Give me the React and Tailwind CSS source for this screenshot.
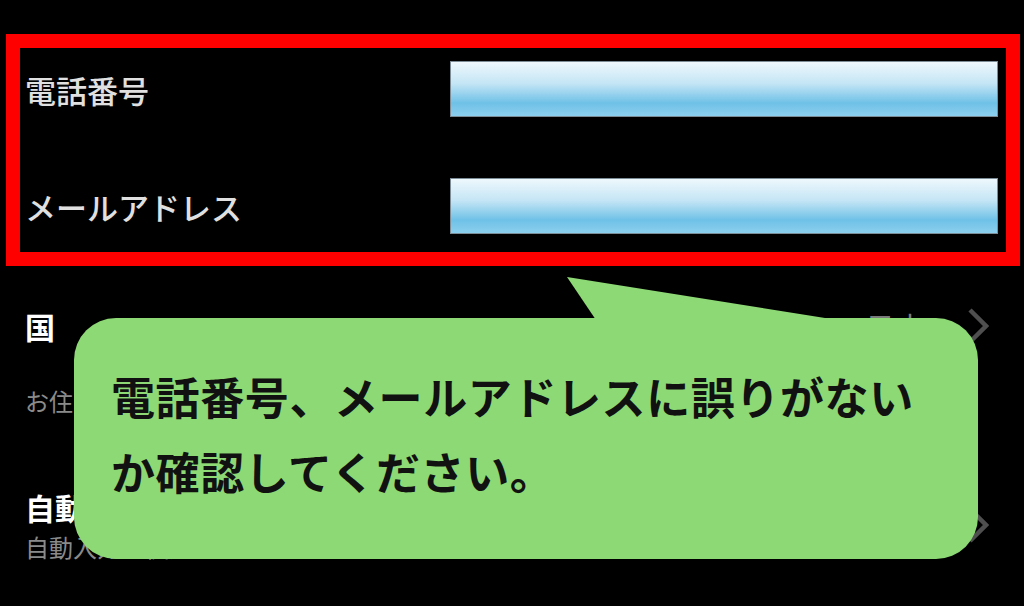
import React from 'react'

const jp = "font-['Noto_Sans_CJK_JP','Noto_Sans',sans-serif]"

function Chevron() {
  return (
    <svg width="22" height="36" viewBox="0 0 22 36" className="shrink-0">
      <path d="M3 2 L19 18 L3 34" fill="none" stroke="#4f4f4f" strokeWidth="4.5" strokeLinejoin="miter" />
    </svg>
  )
}

function FieldRow({ label }) {
  return (
    <div className="flex h-[56px] items-center justify-between">
      <span className="text-[31px] font-medium leading-none text-[#e0e0e0]">{label}</span>
      <div className="h-[56px] w-[548px] border border-[#7d8d98] bg-[linear-gradient(to_bottom,#eef8fd_0%,#c4e5f5_40%,#6fc1e7_76%,#8ccfee_100%)]" />
    </div>
  )
}

export default function App() {
  return (
    <div className={`relative h-[606px] w-[1024px] overflow-hidden bg-black ${jp}`}>
      {/* Highlighted contact fields */}
      <div className="ml-[6px] mt-[34px] flex h-[232px] w-[1014px] flex-col gap-[61px] border-[14px] border-[#ff0000] pl-[5px] pr-[8px] pt-[13px]">
        <FieldRow label="電話番号" />
        <FieldRow label="メールアドレス" />
      </div>

      {/* Settings list underneath */}
      <div className="pl-[25px] pr-[35px]">
        <div className="mt-[40px] flex h-[40px] items-center justify-between">
          <span className="text-[30px] font-semibold leading-[40px] text-white">国</span>
          <div className="flex items-center gap-[42px]">
            <span className="text-[30px] leading-[40px] text-[#7a7a7a]">日本</span>
            <Chevron />
          </div>
        </div>
        <div className="mt-[39px] text-[24px] leading-[32px] text-[#8a8a8a]">お住まいの国または地域</div>

        <div className="mt-[70px] flex items-center justify-between">
          <div className="flex flex-col gap-[4px]">
            <span className="text-[30px] font-bold leading-[40px] text-white">自動入力</span>
            <span className="text-[24px] leading-[32px] text-[#8a8a8a]">自動入力を使用する</span>
          </div>
          <Chevron />
        </div>
      </div>

      {/* Speech bubble callout */}
      <svg className="absolute left-[567px] top-[277px]" width="260" height="46" viewBox="0 0 260 46">
        <polygon points="0,0 258,41 258,46 31,46" fill="#8dd975" />
      </svg>
      <div className="absolute left-[74px] top-[318px] h-[241px] w-[904px] rounded-[42px] bg-[#8dd975] pl-[37px] pt-[41px]">
        <p className="text-[44px] font-semibold leading-[75px] tracking-[0.6px] text-[#111]">
          電話番号、メールアドレスに誤りがない
          <br />
          か確認してください。
        </p>
      </div>
    </div>
  )
}
